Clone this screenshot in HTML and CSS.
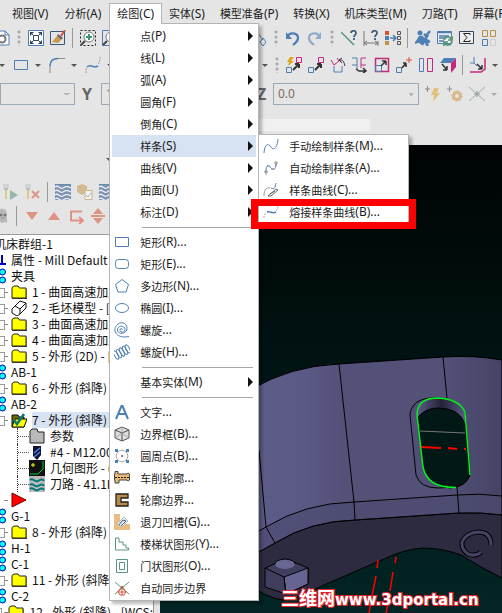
FILE: index.html
```html
<!DOCTYPE html>
<html lang="zh-CN">
<head>
<meta charset="utf-8">
<title>Mill</title>
<link rel="stylesheet" href="styles.css">
</head>
<body>
<svg class="defs" aria-hidden="true">
  <symbol id="folder" viewBox="0 0 16 16"><path d="M1 3.500L3 2h4l1.500 2H15v10H1z" fill="#ff0" stroke="#222"/><path d="M1 14.500h15V5" fill="none" stroke="#333"/></symbol>
  <symbol id="waves" viewBox="0 0 16 16"><path d="M0 0h16v16H0z" fill="#8195aa"/><path d="M0 3c3-3 5 3 8 1s5-2 8 0M0 7c3-3 5 3 8 1s5-2 8 0M0 11c3-3 5 3 8 1s5-2 8 0M0 15c3-3 5 3 8 1s5-2 8 0" fill="none" stroke="#eef" stroke-width="1.300"/></symbol>
  <symbol id="dots" viewBox="0 0 6 16"><circle cx="2.500" cy="4" r="3" fill="#0ff" stroke="#00a"/><circle cx="2.500" cy="12" r="3" fill="#0ff" stroke="#00a"/></symbol>
  <symbol id="drill" viewBox="0 0 16 16"><path d="M0 0h6v4H0z" fill="#c6c6c6" stroke="none"/><path d="M1 4h4v2H1z" fill="#999" stroke="none"/><path d="M2 6h2v9H2z" fill="#d9b23c" stroke="none"/></symbol>
</svg>

<nav class="menubar">
  <button>视图<span class="key">(V)</span></button>
  <button>分析<span class="key">(A)</span></button>
  <div class="tab">
    <button class="open">绘图<span class="key">(C)</span></button>
    <div class="menu draw">
      <button class="sub">点<span class="key">(P)</span></button>
      <button class="sub">线<span class="key">(L)</span></button>
      <button class="sub">弧<span class="key">(A)</span></button>
      <button class="sub">圆角<span class="key">(F)</span></button>
      <button class="sub">倒角<span class="key">(C)</span></button>
      <button class="sub active">样条<span class="key">(S)</span></button>
      <button class="sub">曲线<span class="key">(V)</span></button>
      <button class="sub">曲面<span class="key">(U)</span></button>
      <button class="sub">标注<span class="key">(D)</span></button>
      <hr>
      <button><svg viewBox="0 0 16 16"><path d="M1.500 3.500h13v9h-13z"/></svg>矩形<span class="key">(R)...</span></button>
      <button><svg viewBox="0 0 16 16"><rect x="1.500" y="3.500" width="13" height="9" rx="3"/></svg>矩形<span class="key">(E)...</span></button>
      <button><svg viewBox="0 0 16 16"><path d="M8 1.500l6.500 5-2.500 7.500H4L1.500 6.500z"/></svg>多边形<span class="key">(N)...</span></button>
      <button><svg viewBox="0 0 16 16"><ellipse cx="8" cy="8" rx="6.500" ry="4.500"/></svg>椭圆<span class="key">(I)...</span></button>
      <button><svg viewBox="0 0 16 16"><path d="M8 8c1-2-2-2-2 0 0 3 5 3 5-.5C11 3 3.500 3 3.500 8c0 5 9.500 4 9.500-1.500C13 0 6-1 2.500 3.500-2 9 3 17 15 14.500"/></svg>螺旋<span class="key">...</span></button>
      <button><svg viewBox="0 0 16 16"><g transform="rotate(-28 8 8)"><ellipse cx="1.500" cy="8" rx="1.800" ry="4.500"/><ellipse cx="4.700" cy="8" rx="1.800" ry="4.500"/><ellipse cx="8" cy="8" rx="1.800" ry="4.500"/><ellipse cx="11.300" cy="8" rx="1.800" ry="4.500"/><ellipse cx="14.500" cy="8" rx="1.800" ry="4.500"/></g></svg>螺旋<span class="key">(H)...</span></button>
      <hr>
      <button class="sub">基本实体<span class="key">(M)</span></button>
      <hr>
      <button><svg viewBox="0 0 16 16"><path d="M2 15L7.500 2h1L14 15M4.500 10h7" stroke-width="2"/></svg>文字<span class="key">...</span></button>
      <button><svg viewBox="0 0 16 16"><path d="M8 1l7 3v8l-7 3-7-3V4z" fill="#ddd" stroke="#555"/><path d="M1 4l7 3 7-3M8 7v8" stroke="#555"/><path d="M8 1v6M1 12l7-5 7 5" stroke="#999" stroke-width=".7"/></svg>边界框<span class="key">(B)...</span></button>
      <button><svg viewBox="0 0 16 16"><circle cx="8" cy="8" r="5.800" stroke="#aaa"/><path d="M1 1h3v3H1zM12 1h3v3h-3zM1 12h3v3H1zM12 12h3v3h-3z" fill="#4d7fb5" stroke="none"/><path d="M7 8h2M8 7v2" stroke="#555"/></svg>圆周点<span class="key">(B)...</span></button>
      <button><svg viewBox="0 0 16 16"><path d="M1 1.500h3V4h9l1-1 1.500 1v6l-1.500 1-1-1H5v3H1V10H.5V4H1z" fill="#e6b873" stroke="#444"/><path d="M1 7.500h14" stroke="#222" stroke-dasharray="2 1"/></svg>车削轮廓<span class="key">...</span></button>
      <button><svg viewBox="0 0 16 16"><path d="M2 2h12v4H7v4h7v4H2z" fill="#b88d4b" stroke="#222" stroke-width="1.300"/></svg>轮廓边界<span class="key">...</span></button>
      <button><svg viewBox="0 0 16 16"><path d="M0 0h6v10h10v6H0z" fill="#e9bd80" stroke="none"/><path d="M3 10l7-7 4 4-6 6z" fill="#eee" stroke="#bbb"/><path d="M5 11l4-5M7 12l5-5M9 6l3 1" stroke="#345e8d"/></svg>退刀凹槽<span class="key">(G)...</span></button>
      <button><svg viewBox="0 0 16 16"><path d="M1.500 14V2H5v4h4v3h3v3h2.500v2z" stroke="#5a967e"/></svg>楼梯状图形<span class="key">(Y)...</span></button>
      <button><svg viewBox="0 0 16 16"><path d="M2.500 1.500h11v13h-11zM5.500 4.500h5v7h-5z" stroke="#5a967e"/></svg>门状图形<span class="key">(O)...</span></button>
      <button><svg viewBox="0 0 16 16"><path d="M1 2l14 12M15 2L1 14" stroke="#5a967e"/><path d="M8 6l4 6-2 3H6l-2-3zM4 12h8M8 6v9" stroke="#d4533b"/></svg>自动同步边界</button>
      <div class="menu spline">
        <button><svg viewBox="0 0 16 16"><path d="M1 15C2 4 6 6 8 9s6 3 7-8"/></svg>手动绘制样条<span class="key">(M)...</span></button>
        <button><svg viewBox="0 0 16 16"><path d="M3 12C3 3 6 6 8 8s5 2 5-4"/><path d="M1 12h4M3 10v5M11 3h4M13 1v5M4 6h3M8 9h3" stroke="#888"/></svg>自动绘制样条<span class="key">(A)...</span></button>
        <button><svg viewBox="0 0 16 16"><path d="M1 14C1 7 4 5 7 6" stroke="#999"/><path d="M8 6c4 2 4-1 5-5"/><path d="M5 14l8-7 2 1-7 6zM7 12l5-3" stroke="#666"/></svg>样条曲线<span class="key">(C)...</span></button>
        <button><svg viewBox="0 0 16 16"><path d="M1 14c0-3 1-4 2-5M13 7c1-1 2-3 2-5" stroke="#aaa" stroke-dasharray="2 1"/><path d="M4 8c3-1 5 2 9 0" stroke-width="1.500"/></svg>熔接样条曲线<span class="key">(B)...</span></button>
        <div class="marker"></div>
      </div>
    </div>
  </div>
  <button>实体<span class="key">(S)</span></button>
  <button>模型准备<span class="key">(P)</span></button>
  <button>转换<span class="key">(X)</span></button>
  <button>机床类型<span class="key">(M)</span></button>
  <button>刀路<span class="key">(T)</span></button>
  <button>屏幕<span class="key">(R)</span></button>
</nav>

<header class="bars">
  <div class="row view">
    <div class="group near">
      <button aria-label="设置"><svg viewBox="0 0 16 16"><path d="M1 1h10l4 4v10H1z" fill="#fff"/><path d="M11 1v4h4"/><circle cx="8" cy="9" r="3.500" stroke="#777" stroke-width="2"/></svg></button>
      <i class="grip"></i>
      <button aria-label="适度化"><svg viewBox="0 0 16 16"><path d="M.5.5h15v15H.5z" fill="#fff"/><path d="M3 3l10 10M13 3L3 13" stroke="#34465a"/><path d="M2 2h4L2 6zM14 2v4l-4-4zM2 14v-4l4 4zM14 14h-4l4-4z" fill="#34465a" stroke="none"/><path d="M5.500 5.500h5v5h-5z" fill="#fff" stroke="#34465a"/></svg></button>
      <button aria-label="重画"><svg viewBox="0 0 16 16"><path d="M.5 1.500h14v13H.5z" stroke="#34597f"/><path d="M11 6l4-6" stroke="#d8513b" stroke-width="2"/><path d="M8 4l5 4-2 2-4-4z" fill="#666" stroke="none"/><path d="M7 6l4 4-3 3-6-1z" fill="#c89a4c" stroke="none"/></svg></button>
      <i class="bar"></i>
      <button aria-label="窗口放大"><svg viewBox="0 0 16 16"><path d="M.5.500h15v15H.500z" stroke="#222" stroke-dasharray="2 2"/><circle cx="9" cy="7" r="5" fill="#fff" stroke="#777"/><path d="M5 11l-4 4" stroke="#444" stroke-width="2"/><path d="M6 7h6M9 4v6" stroke="#3d9277" stroke-width="2"/></svg></button>
      <button aria-label="缩放"><svg viewBox="0 0 16 16"><path d="M.5.500h15v15H.500z"/><circle cx="9" cy="7" r="5" fill="#fff" stroke="#777"/><path d="M5 11l-4 4" stroke="#444" stroke-width="2"/></svg></button>
    </div>
    <div class="group">
      <button aria-label="修剪"><svg viewBox="0 0 16 16"><path d="M7 3l5 7" stroke="#777"/><path d="M12 8l3 4-3 4-3-4z"/></svg></button>
      <i class="grip"></i>
      <button aria-label="撤消"><svg viewBox="0 0 16 16"><path d="M2 7c3-6 11-4 11 1 0 4-3 5-5 7" stroke-width="2.200"/><path d="M1 2v7h6z" fill="#4d7fb5" stroke="none"/></svg></button>
      <button aria-label="重做"><svg class="faded" viewBox="0 0 16 16"><path d="M13 7C10 1 2 3 2 8c0 4 3 5 5 7" stroke-width="2.200"/><path d="M14 2v7H8z" fill="#4d7fb5" stroke="none"/></svg></button>
      <i class="grip"></i>
      <button aria-label="分析线"><svg viewBox="0 0 16 16"><path d="M0 2l13 13" stroke="#559179" stroke-width="1.500"/><path d="M10 3c0-3 5-3 5 0 0 2-2 2-2 4M13 8v2" stroke="#2f5577" stroke-width="1.700"/></svg></button>
      <button aria-label="分析距离"><svg viewBox="0 0 16 16"><path d="M1 1v15M15 11v5M1 13h14M4 11l-3 2 3 2M12 11l3 2-3 2" stroke="#777"/><path d="M9 3c0-3 5-3 5 0 0 2-2 2-2 4M12 8v2" stroke="#2f5577" stroke-width="1.700"/></svg></button>
      <button aria-label="属性"><svg viewBox="0 0 16 16"><path d="M0 1h4v4H0z" fill="#d8513b" stroke="none"/><path d="M0 6h4v4H0z" fill="#4d7fb5" stroke="none"/><path d="M0 11h4v4H0z" fill="#c09343" stroke="none"/><path d="M5 8h5M8 5l3 3-3 3" stroke-width="1.500"/><path d="M12.500 1.500h3v3h-3zM12.500 6.500h3v3h-3zM12.500 11.500h3v3h-3z" stroke="#555"/></svg></button>
      <i class="bar"></i>
      <button aria-label="配置"><svg viewBox="0 0 16 16"><circle cx="5" cy="3" r="2.500" fill="#4d7fb5" stroke="none"/><path d="M1 11l3-5h4l2 4-3 5z" fill="#4d7fb5" stroke="none"/><path d="M9 4l2 2 4-5M13 5l-3 4 5 3M0 13l6-3M10 9l-3 6M11 13l2 3M9 12h5" stroke-width="2.500"/></svg></button>
      <button aria-label="刷新"><svg viewBox="0 0 16 16"><path d="M.5 1.500h14v12H.5z" fill="#eee"/><path d="M0 2.500h15M2 6h10M2 8h6M2 11h5" stroke-width="1.500"/><path d="M7 10c1-4 6-4 7-1M15 11c-1 5-6 5-7 2M15 6v4h-4M7 16v-4h4" stroke="#559179" stroke-width="1.700"/></svg></button>
      <button aria-label="统计"><svg viewBox="0 0 16 16"><path d="M.5 1.500h14v12H.5z" fill="#eee" stroke="#34465a"/><path d="M11 5V3.500H4.500l3.500 4-3.500 4H11V10" stroke="#222"/></svg></button>
      <button aria-label="窗格"><svg viewBox="0 0 16 16"><path d="M1.500.5h5v6h-5zM9.500.5h5v6h-5z" stroke="#b88d4b"/><path d="M1.500 9.500h5v6h-5z"/><path d="M9.500 9.500h5v6h-5z" stroke="#ccc"/></svg></button>
    </div>
  </div>
  <div class="row shape">
    <div class="group near">
      <i class="drop"></i>
      <button aria-label="矩形"><svg viewBox="0 0 16 16"><path d="M1.500 3.500h13v9h-13z"/></svg></button>
      <i class="drop"></i>
      <button aria-label="圆角"><svg viewBox="0 0 16 16"><path d="M1 16V8M9 1.500h7" stroke="#888"/><path d="M1 9c0-5 3-7.500 8-7.500" stroke-width="1.500"/></svg></button>
      <i class="drop"></i>
      <button aria-label="曲线"><svg viewBox="0 0 16 16"><path d="M1 16c0-3 0-4 1-6M13 7c2-2 2-4 2-7" stroke="#999" stroke-dasharray="2 1"/><path d="M2 10c4-4 6 2 11-1" stroke-width="1.500"/></svg></button>
      <i class="drop"></i>
    </div>
    <div class="group">
      <i class="drop"></i>
      <i class="grip"></i>
      <button aria-label="动态转换"><svg viewBox="0 0 16 16"><path d="M4 0h4L5 4h3L2 9l1-4H1z" fill="#e0a614" stroke="none"/><path d="M10.500.5h5v5h-5z" stroke="#c32a7e"/><path d="M.5 10.500h5v5h-5z"/><path d="M7 13l5-5M13 7v4M13 7H9" stroke="#333" stroke-width="2"/></svg></button>
      <button aria-label="平移"><svg viewBox="0 0 16 16"><path d="M10.500.5h5v5h-5z" stroke="#c32a7e"/><path d="M.5 10.500h5v5h-5z"/><path d="M7 13l5-5M13 7v4M13 7H9" stroke="#333" stroke-width="2"/></svg></button>
      <button aria-label="旋转"><svg viewBox="0 0 16 16"><path d="M1 3l3 5 5-4-2-3" stroke="#c32a7e"/><path d="M4 9v6h8V9"/><path d="M10 3c4 0 4 3 5 6M9 3l3-2M9 3l3 3" stroke="#333"/></svg></button>
      <button aria-label="镜像"><svg viewBox="0 0 16 16"><path d="M0 1h5v7H0M5 8v5"/><path d="M14 1H9v7h5M9 8v3" stroke="#c32a7e"/><path d="M4 12l3 2h6M11 11l3 3-3 2" stroke="#333" stroke-width="1.500"/></svg></button>
      <button aria-label="比例"><svg viewBox="0 0 16 16"><path d="M1.500 1.500h13v13h-13z" stroke="#c32a7e" stroke-width="1.500"/><path d="M1.500 8.500h6v6h-6z"/><path d="M7 9l5-5M12 4v4M12 4H8" stroke="#333" stroke-width="1.500"/></svg></button>
      <button aria-label="移动到原点"><svg viewBox="0 0 16 16"><path d="M.5 10.500h5v5h-5z"/><path d="M6 11l4-5M10 6v4M10 6H7" stroke="#333" stroke-width="1.500"/><path d="M10 3h6M13 0v6" stroke="#d8513b"/></svg></button>
      <button aria-label="补正"><svg viewBox="0 0 16 16"><path d="M1.500 1.500h4v13h-4z"/><path d="M9.500 1.500h5v13h-5z" stroke="#c32a7e"/></svg></button>
      <button aria-label="投影"><svg viewBox="0 0 16 16"><path d="M4 1h12l-5 5H0z" fill="#4d7fb5" stroke="none"/><path d="M16 1v9l-5 6V6z" fill="#c32a7e" stroke="none"/><path d="M2 7l5 6M7 13V9M7 13H3" stroke="#333" stroke-width="1.500"/></svg></button>
      <i class="bar"></i>
      <button aria-label="修剪延伸"><svg viewBox="0 0 16 16"><path d="M15 1v11l-4 3H0" stroke="#c32a7e" stroke-width="1.500"/><path d="M4 0v6H0M4 6l3 3"/><path d="M7 7l5 5M12 12V8M12 12H8" stroke="#333" stroke-width="1.500"/></svg></button>
      <i class="drop"></i>
    </div>
  </div>
  <div class="row coords">
    <div class="group near">
      <select class="x" aria-label="X"><option></option></select>
      <label for="y">Y</label>
      <select class="value" id="y"><option>1</option></select>
    </div>
    <div class="group">
      <label for="z">Z</label>
      <select class="value" id="z"><option>0.0</option></select>
      <button aria-label="快速点"><svg class="faded" viewBox="0 0 16 16"><path d="M0 3h5M2.500 0v6" stroke="#444"/><path d="M9 2h5l-2 5h3l-7 9 1-7H6z" fill="#dfa526" stroke="none"/></svg></button>
      <button aria-label="点设置"><svg class="faded" viewBox="0 0 16 16"><path d="M0 3h5M2.500 0v6" stroke="#444"/><circle cx="10" cy="10" r="3.500" stroke="#cd953c" stroke-width="3"/><circle cx="10" cy="10" r="5.200" stroke="#cd953c" stroke-dasharray="2 2"/></svg></button>
      <button aria-label="相交点"><svg class="faded" viewBox="0 0 16 16"><path d="M0 1l16 14M16 1L0 15" stroke="#559179"/><path d="M5 8h6M8 5v6" stroke="#555"/></svg></button>
      <i class="drop"></i>
    </div>
  </div>
  <div class="prompt"></div>
</header>

<main>
  <aside>
    <div class="collapse"><i class="drop"></i></div>
    <div class="group ops">
      <button aria-label="选择刀路"><svg class="faded" viewBox="0 0 16 16"><use href="#drill"/><path d="M7 6l8 5-8 5z" fill="#559179" stroke="none"/></svg></button>
      <button aria-label="取消选择"><svg class="faded" viewBox="0 0 16 16"><use href="#drill"/><path d="M7 7l7 7M14 7l-7 7" stroke="#d8513b" stroke-width="2"/></svg></button>
      <i class="bar"></i>
      <button aria-label="重建刀路"><svg viewBox="0 0 16 16"><use href="#waves"/></svg></button>
      <button aria-label="验证"><svg class="faded" viewBox="0 0 16 16"><path d="M0 2l5-2 5 2v6l-5 3-5-3z" fill="#c49a50" stroke="none"/><path d="M8 6.500h7v9H8z" fill="#fff" stroke="#b58a42"/><path d="M9 11l2 2 3-4" stroke="#559179"/></svg></button>
      <button aria-label="模拟"><svg viewBox="0 0 16 16"><use href="#waves"/></svg></button>
    </div>
    <div class="group moves">
      <button aria-label="隐藏"><svg viewBox="0 0 16 16"><path d="M3 15V6c0-7 10-7 10 0v9l-2-1-2 1-3-1z" fill="#b9b9b9" stroke="none"/><path d="M6 6h2v2H6zM10 6h2v2h-2zM7 10h4" fill="#777" stroke="#777" stroke-width=".5"/></svg></button>
      <i class="bar"></i>
      <button aria-label="下移"><svg viewBox="0 0 16 16"><path d="M2 4h12l-6 8z" fill="#df9384" stroke="none"/></svg></button>
      <button aria-label="上移"><svg viewBox="0 0 16 16"><path d="M2 12h12L8 4z" fill="#df9384" stroke="none"/></svg></button>
      <button aria-label="插入"><svg viewBox="0 0 16 16"><path d="M14 3.500H3v9h11M11 9l4 3.500-4 3.500" stroke="#df9384" stroke-width="2"/></svg></button>
      <button aria-label="居中"><svg viewBox="0 0 16 16"><path d="M3 6h10L8 0zM3 10h10l-5 6zM1 7h14v2H1z" fill="#df9384" stroke="none"/></svg></button>
    </div>
    <ul class="tree">
      <li class="root">机床群组-1</li>
      <li class="node"><svg viewBox="0 0 6 16"><path d="M2 3v8M0 12h6" stroke="#00c" stroke-width="2"/></svg>属性 - Mill Default MI</li>
      <li class="node"><svg viewBox="0 0 6 16"><use href="#dots"/></svg>夹具</li>
      <li class="op"><svg viewBox="0 0 16 16"><use href="#folder"/></svg>1 - 曲面高速加工</li>
      <li class="op"><svg viewBox="0 0 16 16"><path d="M1 9l3-3 5 3v5l-3 2-5-3zM4 6l5-5 6 2v5l-6 6M9 9l6-6" fill="#fff" stroke="#111"/></svg>2 - 毛坯模型 - [W</li>
      <li class="op"><svg viewBox="0 0 16 16"><use href="#folder"/></svg>3 - 曲面高速加工</li>
      <li class="op"><svg viewBox="0 0 16 16"><use href="#folder"/></svg>4 - 曲面高速加工</li>
      <li class="op"><svg viewBox="0 0 16 16"><use href="#folder"/></svg>5 - 外形 (2D) - [W</li>
      <li class="node"><svg viewBox="0 0 6 16"><use href="#dots"/></svg>AB-1</li>
      <li class="op"><svg viewBox="0 0 16 16"><use href="#folder"/></svg>6 - 外形 (斜降) -</li>
      <li class="node"><svg viewBox="0 0 6 16"><use href="#dots"/></svg>AB-2</li>
      <li class="op current"><svg viewBox="0 0 16 16"><path d="M1 3h6l1 2h5v10H1z" fill="#6b6b00" stroke="#111"/><path d="M4 7h12l-3 8H1z" fill="#ff0" stroke="#111"/><path d="M3 8l3 4 7-10" stroke="#087878" stroke-width="2.500" fill="none"/></svg><span>7 - 外形 (斜降) -</span></li>
      <li class="part"><svg viewBox="0 0 16 16"><path d="M1 3l2-2h5l1 3h6v11H1z" fill="#b9b9b9" stroke="#222"/></svg>参数</li>
      <li class="part"><svg viewBox="0 0 16 16"><path d="M4 2h8v9l-4 5-4-4z" fill="#113" /><path d="M5 9l6-5M5 13l6-5" stroke="#48e" stroke-width="1.500"/></svg>#4 - M12.00</li>
      <li class="part"><svg viewBox="0 0 16 16"><path d="M0 0h16v16H0z" fill="#111"/><path d="M14 1v8l-5 5H1" stroke="#0c3" fill="none"/><path d="M2 5h4M4 3v4" stroke="#ff0"/></svg>几何图形 - (</li>
      <li class="part last"><svg viewBox="0 0 16 16"><path d="M0 0h16v16H0z" fill="#bbb"/><path d="M1 4c3-3 5 3 8 1s5-2 6 0M1 9c3-3 5 3 8 1s5-2 6 0M1 13c3-3 5 3 8 1s5-2 6 0" fill="none" stroke="#077" stroke-width="2"/></svg>刀路 - 41.1K</li>
      <li class="op pointer"><svg viewBox="0 0 16 16"><path d="M1 1l14 7-14 7z" fill="red" stroke="#700"/></svg></li>
      <li class="node"><svg viewBox="0 0 6 16"><use href="#dots"/></svg>G-1</li>
      <li class="op"><svg viewBox="0 0 16 16"><use href="#folder"/></svg>8 - 外形 (斜降) -</li>
      <li class="node"><svg viewBox="0 0 6 16"><use href="#dots"/></svg>H-1</li>
      <li class="node"><svg viewBox="0 0 6 16"><use href="#dots"/></svg>C-1</li>
      <li class="op"><svg viewBox="0 0 16 16"><use href="#folder"/></svg>11 - 外形 (斜降)</li>
      <li class="node"><svg viewBox="0 0 6 16"><use href="#dots"/></svg>C-2</li>
      <li class="op"><svg viewBox="0 0 16 16"><use href="#folder"/></svg>12 - 外形 (斜降) - [WCS:</li>
    </ul>
  </aside>
  <section class="viewport">
    <svg viewBox="160 145 342 468" preserveAspectRatio="xMaxYMin slice" role="img" aria-label="零件模型">
      <defs>
        <linearGradient id="sky" x2="0" y2="1"><stop offset="0" stop-color="#000303"/><stop offset="1" stop-color="#032525"/></linearGradient>
        <linearGradient id="wall" gradientUnits="userSpaceOnUse" x1="259" x2="502"><stop offset="0" stop-color="#5d5b88"/><stop offset=".2" stop-color="#5a5884"/><stop offset=".35" stop-color="#535178"/><stop offset=".75" stop-color="#535178"/><stop offset="1" stop-color="#454365"/></linearGradient>
        <linearGradient id="rim"><stop offset="0" stop-color="#5a5882"/><stop offset=".5" stop-color="#242238"/><stop offset="1" stop-color="#5a5882"/></linearGradient>
      </defs>
      <path d="M160 145h342v468H160z" fill="url(#sky)"/>
      <path d="M250 390Q290 366 339 364L443 357Q475 355 502 360V578Q480 567 461 555Q442 548 423 548Q405 549 384 559L292 599Q278 604 250 586z" fill="#2d2b40" stroke="#000"/>
      <path d="M250 390Q290 366 339 364L443 357Q475 355 502 360V515Q480 512 459 513L355 520Q310 521 275 543L250 557z" fill="url(#wall)" stroke="#000"/>
      <path d="M250 536L266 527Q305 503 354 502L457 495Q480 493 502 496V515Q480 512 459 513L355 520Q310 521 275 543L250 557z" fill="#4b496e" fill-opacity=".65" stroke="#000"/>
      <path d="M339 364L354 502 355 520M443 357L447 398M457 487L459 513M259 450L266 527 275 543" fill="none" stroke="#000"/>
      <path d="M417 402Q410 408 410 415L416 475Q420 488 438 488L456 487Q470 482 470 472L465 412Q460 400 440 398Q425 397 417 402z" fill="#514f77" stroke="#000"/>
      <path d="M418 417Q418 398 440 398Q461 401 465 415V423H418z" fill="url(#rim)"/>
      <path d="M418 417Q426 408 438 408Q459 408 465 424L470 475Q466 487 450 488Q426 485 423 466z" fill="#021816" stroke="#000"/>
      <path d="M420 431L465 433" stroke="#777"/>
      <path d="M421 447l20 1M448 448l9 1M464 449h2" stroke="red" stroke-width="2"/>
      <path d="M470 475L465 412Q459 399 438 398Q417 398 417 415L423 467Q427 488 456 487.500" fill="none" stroke="#00f21b" stroke-width="1.500"/>
      <path d="M378 560l-1 8M376 576l-4 20M371 602l-2 11M396 557l-1 6M393 572l-3 19M388 604l-2 9" stroke="red" stroke-width="1.500"/>
      <path d="M481 552Q476 557 468 554Q461 549 462 542Q466 533 478 532Q491 532 491 545" fill="none" stroke="#000" stroke-width="5"/>
      <path d="M481 552Q476 557 468 554Q461 549 462 542Q466 533 478 532Q491 532 491 545" fill="none" stroke="#454365" stroke-width="3"/>
      <path d="M265 568l21-9 22 9v16l-22 10-21-7z" fill="#403e5e" stroke="#000"/>
      <path d="M284 577l24-9v16l-22 10z" fill="#666493" stroke="#000"/>
      <path d="M265 568l19 9 2 17" fill="none" stroke="#000"/>
      <ellipse cx="285" cy="564" rx="10" ry="5" fill="#686693"/>
      <path d="M275 564q0-4 10-5 10 1 10 5" fill="none" stroke="#000"/>
      <text class="stamp" x="281" y="605"><tspan class="han">三维网</tspan>www.3dportal.cn</text>
    </svg>
  </section>
</main>
</body>
</html>
```

FILE: styles.css
```css
* { box-sizing: border-box; }

body {
  margin: 0;
  height: 100vh;
  overflow: hidden;
  display: flex;
  flex-direction: column;
  background: #e5e5e5;
  color: #1c1c1c;
  font: 11px/16px "Noto Sans CJK SC", sans-serif;
}

.defs { display: none; }

button {
  border: 0;
  padding: 0;
  background: none;
  color: inherit;
  font: inherit;
  white-space: nowrap;
}

button svg {
  display: block;
  width: 16px;
  height: 16px;
  fill: none;
  stroke: #4d7fb5;
}

.faded { opacity: .55; }
.key { font: 12px/16px "Noto Sans", sans-serif; }

/* Menu bar */
.menubar {
  display: flex;
  flex: none;
  height: 24px;
  padding: 3px 0 0 4px;
}
.menubar > button,
.tab > .open { flex: none; height: 21px; padding: 0 8px; }
.tab ~ button { padding-left: 7px; }
.tab { position: relative; flex: none; }
.tab > .open {
  position: relative;
  z-index: 3;
  background: #fff;
  box-shadow: inset 1px 1px #b4b4b4, inset -1px 0 #b4b4b4;
}

/* Drop-down menus */
.menu {
  position: absolute;
  z-index: 2;
  border: 1px solid #b4b4b4;
  background: #fff;
  box-shadow: 3px 3px 3px #0004;
}
.menu > button {
  display: flex;
  align-items: center;
  width: 100%;
  height: 22px;
}
.draw { top: 20px; left: 0; width: 150px; padding: 1px 2px; }
.draw > button { padding-left: 28px; }
.draw > button svg { margin: 0 10px 0 -26px; }
.draw hr {
  height: 1px;
  margin: 4px 3px 3px 30px;
  border: 0;
  background: #a8a8a8;
}
.sub::after {
  content: "";
  margin: 0 3px 0 auto;
  border: 5px solid transparent;
  border-left-color: #111;
  border-right: 0;
}
.active { background: #d7e2f2; }
.spline { top: 110px; left: 148px; width: 151px; padding: 0 2px; }
.spline > button { padding-left: 2px; }
.spline > button svg { margin-right: 10px; }
.marker {
  position: absolute;
  top: 64px;
  left: -8px;
  width: 165px;
  height: 30px;
  border: 7px solid red;
}

/* Toolbars */
.bars { flex: none; overflow: hidden; }
.row { display: grid; grid-template-columns: 251px 1fr; align-items: center; }
.group { display: flex; align-items: center; gap: 6px; }
.group > * { flex: none; }
.view { height: 28px; }
.view .near { margin-left: -6px; }
.shape { height: 26px; }
.shape .near { margin-left: -1px; }
.shape .near button { margin-left: 2px; }
.shape .group:last-child { padding-left: 11px; }
.coords { height: 32px; grid-template-columns: 257px 1fr; }
.grip {
  width: 6px;
  height: 16px;
  background: radial-gradient(circle at 3px 2px, #aaa 1px, transparent 2px) 0 0 / 6px 5px;
}
.bar { width: 2px; height: 20px; border-left: 1px solid #999; }
.drop {
  width: 5px;
  border: 3px solid transparent;
  border-top-color: #555;
  border-bottom: 0;
}
select {
  appearance: none;
  width: 146px;
  height: 22px;
  padding: 0 4px;
  border: 1px solid #9ba8b5;
  border-radius: 0;
  background: conic-gradient(from -45deg at 50% 100%, #b5b5b5 90deg, transparent 0) right 5px center / 6px 3px no-repeat #e5e5e5;
  background: linear-gradient(to bottom right, #b5b5b5 50%, transparent 50%) right 4px center / 3px 3px no-repeat, linear-gradient(to bottom left, #b5b5b5 50%, transparent 50%) right 7px center / 3px 3px no-repeat, #e5e5e5;
  color: #806a5c;
  font: 12px/16px "Noto Sans", sans-serif;
}
.x { width: 75px; }
.coords label { width: 10px; color: #666; font: bold 16px/20px "Open Sans", sans-serif; }
.coords .near label { margin: 0 3px 0 1px; }
.coords .drop { opacity: .4; }
.prompt {
  height: 12px;
  margin: 9px 132px 14px 250px;
  background: #f0f0f0;
}

/* Operations panel */
main { flex: 1; min-height: 0; display: flex; }
aside {
  flex: none;
  width: 160px;
  overflow: hidden;
  display: flex;
  flex-direction: column;
  border-right: 6px solid #e5e5e5;
}
.collapse { height: 34px; padding: 16px 0 0 106px; }
.ops { height: 25px; padding-left: 3px; }
.moves { height: 24px; margin-left: -6px; }
.tree {
  flex: 1;
  min-height: 0;
  margin: 6px 0 0;
  padding: 1px 0 0;
  list-style: none;
  border-top: 1px solid #999;
  border-right: 1px solid #999;
  background: #fff;
  color: #111;
  font: 12px/16px "Noto Sans CJK SC", sans-serif;
}
.tree li { display: flex; height: 16px; white-space: nowrap; }
.tree svg { flex: none; width: 16px; height: 16px; }
.root { margin-left: -6px; }
.node svg { margin-right: 5px; }
.tree .node svg { width: 6px; }
.op::before {
  content: "";
  width: 6px;
  height: 8px;
  margin: 4px 3px 0 -3px;
  border: 1px solid #999;
}
.op { background: linear-gradient(#888, #888) 4px 8px / 4px 1px no-repeat; }
.op svg { margin: 0 5px 0 3px; }
.tree .pointer::before { visibility: hidden; }
.current span { background: #d7e2f2; }
.part { padding-left: 17px; }
.part::before {
  content: "";
  width: 11px;
  border-left: 1px dotted #333;
  background: repeating-linear-gradient(90deg, #555 0 1px, transparent 1px 2px) 0 8px / 11px 1px no-repeat;
}
.part svg { margin-right: 5px; }

/* Graphics window */
.viewport { flex: 1; min-width: 0; background: #032020; }
.viewport > svg { display: block; width: 100%; height: 100%; }
.stamp {
  fill: #fff;
  stroke: #e3262e;
  stroke-width: 2px;
  paint-order: stroke;
  font: bold 15px "DejaVu Sans", sans-serif;
}
.han { font: bold 18px "Noto Sans CJK SC", sans-serif; }
```
